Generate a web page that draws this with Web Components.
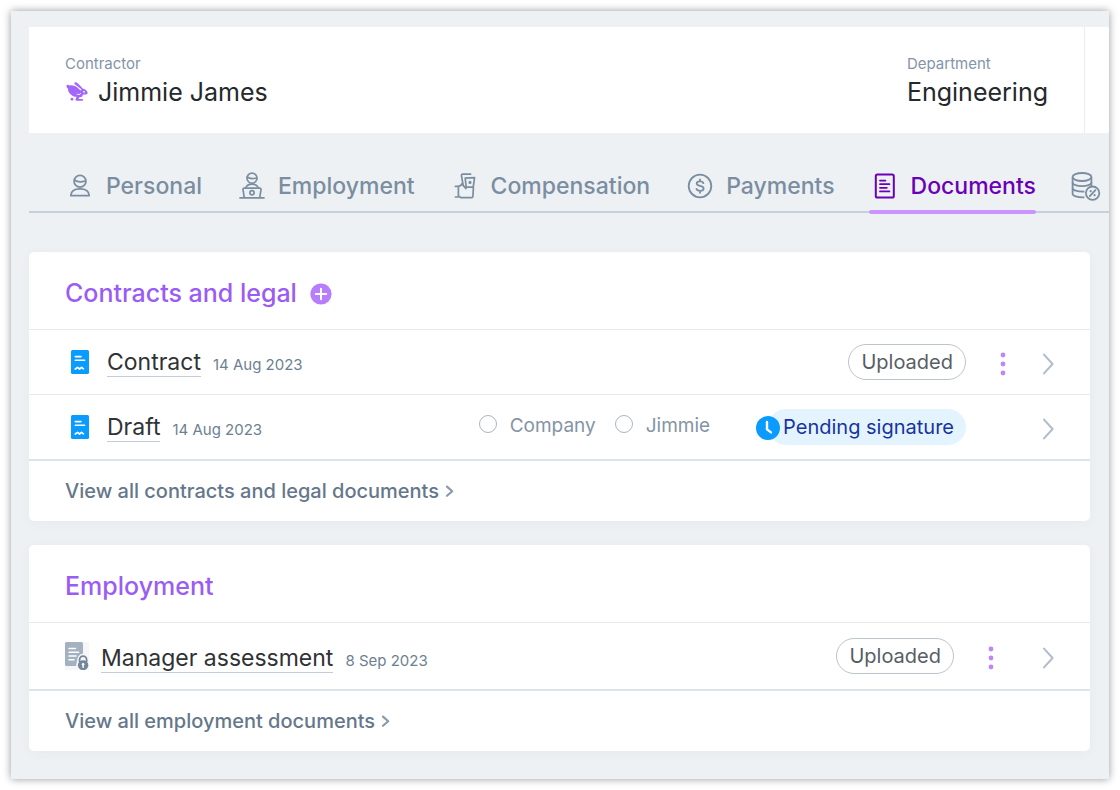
<!DOCTYPE html>
<html lang="en">
<head>
<meta charset="utf-8">
<title>Jimmie James - Documents</title>
<style>
  body {
    margin: 0;
    padding: 11px;
    min-height: 100vh;
    box-sizing: border-box;
    display: flex;
    background: #fff;
    font-family: Inter, "Liberation Sans", sans-serif;
    color: #25282c;
  }
</style>
</head>
<body>
<worker-page>
  <worker-summary slot="header">
    <summary-field label="Contractor" icon="rabbit">Jimmie James</summary-field>
    <summary-field label="Department">Engineering</summary-field>
  </worker-summary>

  <tab-bar slot="tabs">
    <tab-link icon="person">Personal</tab-link>
    <tab-link icon="laptop">Employment</tab-link>
    <tab-link icon="cash">Compensation</tab-link>
    <tab-link icon="dollar">Payments</tab-link>
    <tab-link icon="document" active>Documents</tab-link>
    <tab-link icon="coins" label="Tax"></tab-link>
  </tab-bar>

  <doc-card heading="Contracts and legal" addable more="View all contracts and legal documents">
    <doc-row name="Contract" date="14 Aug 2023" icon="contract" menu>
      <status-pill slot="status">Uploaded</status-pill>
    </doc-row>
    <doc-row name="Draft" date="14 Aug 2023" icon="contract">
      <signer-list slot="signers" names="Company,Jimmie"></signer-list>
      <status-pill slot="status" type="pending">Pending signature</status-pill>
    </doc-row>
  </doc-card>

  <doc-card heading="Employment" more="View all employment documents">
    <doc-row name="Manager assessment" date="8 Sep 2023" icon="locked" menu locked>
      <status-pill slot="status">Uploaded</status-pill>
    </doc-row>
  </doc-card>
</worker-page>

<script>
const ICONS = {
  rabbit: [22, 20, `
    <path fill="currentColor" d="M.6 3.6C1 2.4 2.6 2.4 3.4 3.5C6 2.9 9 3.6 11.4 5.6L14.6 8.4L15.6 7.4L8.8 2.3C7.8 1 8.8-.2 10.2.3C12.6 2 15 4.2 16.6 6.6C19 7 21 8.6 21.6 10.4C21.8 12 20.4 12.6 18.6 12.6L16.6 12.8C17 14 16 15 14.6 15.2L13.4 15.2L12.6 17H16C17.4 17 17.4 18.8 16.2 18.8H11C9.6 18.8 9.2 17.6 9.8 16.6L10.6 14.8C8.4 15 6.4 14 5 12.4C3 11 1.9 9 2 6.6C.8 6 .3 4.8 .6 3.6Z"/>
    <circle cx="6" cy="17.2" r="1.4" fill="currentColor"/>
    <path fill="none" stroke="#fff" stroke-width=".9" stroke-linecap="round" d="M11 12.2C12.2 13 13.6 12.6 14.6 11.6"/>
    <circle cx="18" cy="9.8" r=".9" fill="#fff"/>`],
  person: [24, 24, `
    <g fill="none" stroke="currentColor" stroke-width="1.8" stroke-linejoin="round">
      <circle cx="12" cy="7.3" r="5.9"/>
      <path d="M6.6 6C9.4 8.2 13.6 8.1 17.2 7"/>
      <path d="M2.8 21.6C3 17.4 6.4 14.8 12 14.8S21 17.4 21.2 21.6Z"/>
    </g>`],
  laptop: [28, 28, `
    <g fill="none" stroke="currentColor" stroke-width="1.7" stroke-linejoin="round" stroke-linecap="round">
      <circle cx="14" cy="6.2" r="5"/>
      <path d="M9.2 5C11.8 7 15.4 6.9 18.6 6"/>
      <path d="M8 15.2C9.2 13 11.4 12.2 14 12.2S18.8 13 20 15.2"/>
      <path d="M6.2 25.2L5 17.6Q5 16.2 6.2 16.2H21.8Q23 16.2 23 17.6L21.8 25.2"/>
      <circle cx="14" cy="20.8" r="2.1"/>
      <path d="M2 25.8H26"/>
    </g>`],
  cash: [24, 28, `
    <g fill="none" stroke="currentColor" stroke-width="1.7" stroke-linejoin="round" stroke-linecap="round">
      <path d="M12.2 6.2L21.6 5.6L20.2 15.2H13.2Z"/>
      <path d="M10.2 13.4L8.4 3.4Q8.4 2.2 9.6 2.2H17.6"/>
      <path d="M2.4 14.4H4.8C7 14.4 8.2 13.4 9 11.6M5.4 14.6V24M10.2 13.4L13 16.6"/>
      <path d="M2.4 25H5Q6.6 24 7.6 25.6H18.6Q19.8 25.6 19.9 24.4L20.4 15.4"/>
      <circle cx="17" cy="10.4" r=".7" fill="currentColor"/>
    </g>`],
  dollar: [26, 26, `
    <g fill="none" stroke="currentColor" stroke-width="1.8" stroke-linecap="round">
      <circle cx="13" cy="13" r="11.3"/>
      <path d="M16.4 10.2C16 8.9 14.8 8.3 13 8.3C11 8.3 9.7 9.2 9.7 10.6C9.7 13.8 16.6 12 16.6 15.5C16.6 17 15.1 17.9 13.1 17.9C11.1 17.9 9.8 17.1 9.4 15.8M13 6.4V8.2M13 17.9V19.8"/>
    </g>`],
  document: [24, 28, `
    <g fill="none" stroke="currentColor" stroke-width="2" stroke-linecap="round">
      <rect x="2.8" y="2.6" width="18" height="23" rx="1.6"/>
      <path stroke-width="1.8" d="M7 8.6H12.4M7 12.2H16.4M7 15.8H13.8M7 19.4H16.4"/>
    </g>`],
  coins: [32, 32, `
    <g fill="none" stroke="currentColor" stroke-width="1.8">
      <ellipse cx="12" cy="7" rx="9.4" ry="4"/>
      <path d="M2.6 7V23.4C2.6 25.8 7 27.6 14.4 27.4M21.4 7V16"/>
      <path d="M2.6 12.4C2.6 14.6 7 16.2 12 16.2S21.4 14.6 21.4 12.4M2.6 18C2.6 20.2 7 21.8 14.4 21.6"/>
      <circle cx="22.6" cy="23.2" r="6.7"/>
      <path d="M25.4 20.2L19.8 26.2" stroke-linecap="round"/>
    </g>
    <g fill="currentColor"><circle cx="20.7" cy="21.2" r="1.1"/><circle cx="24.6" cy="25.2" r="1.1"/></g>`],
  contract: [18, 24, `
    <rect width="18" height="24" rx="1.5" fill="#0a9bff"/>
    <path fill="none" stroke="#fff" stroke-width="1.6" stroke-linecap="round" d="M4.3 6.6H10M4.3 10.3H13.6"/>
    <path fill="none" stroke="#fff" stroke-width="1.7" stroke-linecap="round" stroke-linejoin="round" d="M4.3 19L6.6 17.4L8.6 19L10.6 17.4L12.4 18.8"/>`],
  locked: [24, 28, `
    <rect width="24" height="28" fill="#f5f6f8"/>
    <path fill="#a3b1c1" d="M1.5 0H16.5Q18 0 18 1.5V11.4Q13 12.4 12.4 17L11 24H1.5Q0 24 0 22.5V1.5Q0 0 1.5 0Z"/>
    <path fill="none" stroke="#fff" stroke-width="1.5" stroke-linecap="round" d="M4 6.6H10.4M4 10.3H13.6M4 14H11M4 17.8H9"/>
    <path fill="none" stroke="#74869a" stroke-width="1.8" d="M14.6 20V17.6A3.5 3.5 0 0 1 21.6 17.6V20"/>
    <ellipse cx="18.1" cy="23.2" rx="5.2" ry="5" fill="#74869a"/>
    <path stroke="#fff" stroke-width="1.4" stroke-linecap="round" d="M18.1 22.4V25.4"/>
    <circle cx="18.1" cy="22.2" r="1.3" fill="#fff"/>`],
  plus: [22, 22, `
    <circle cx="11" cy="11" r="10.6" fill="#b77dff"/>
    <path stroke="#fff" stroke-width="2" stroke-linecap="round" d="M11 5.8V16.2M5.8 11H16.2"/>`],
  dots: [24, 24, `
    <g fill="#bd86fb"><circle cx="12" cy="3" r="2.4"/><circle cx="12" cy="12" r="2.4"/><circle cx="12" cy="21" r="2.4"/></g>`],
  chevron: [24, 24, `
    <path fill="none" stroke="#b1bdca" stroke-width="2" stroke-linecap="round" stroke-linejoin="round" d="M8 2.6L16.6 12L8 21.4"/>`],
  more: [10, 14, `
    <path fill="none" stroke="#8b9aab" stroke-width="2.2" stroke-linecap="round" stroke-linejoin="round" d="M2 2.6L7.2 7.2L2 11.8"/>`],
  clock: [24, 24, `
    <circle cx="12" cy="12" r="12" fill="#0a9bff"/>
    <path fill="none" stroke="#fff" stroke-width="2.4" stroke-linecap="round" stroke-linejoin="round" d="M11 6V13.4L15 16.4"/>`]
};

class BaseElement extends HTMLElement {
  constructor() {
    super();
    this.attachShadow({ mode: 'open' });
  }

  connectedCallback() {
    this.shadowRoot.innerHTML = this.render();
  }

  attr(name) {
    return this.getAttribute(name) || '';
  }
}

class UiIcon extends BaseElement {
  render() {
    const [w, h, shapes] = ICONS[this.attr('name')];
    return `
      <style>
        :host { display: inline-flex; flex: none; }
        svg { display: block; }
      </style>
      <svg width="${w}" height="${h}" viewBox="0 0 ${w} ${h}" aria-hidden="true">${shapes}</svg>
    `;
  }
}

class WorkerPage extends BaseElement {
  render() {
    return `
      <style>
        :host {
          display: block;
          flex: 1;
          min-width: 0;
          box-sizing: border-box;
          padding: 16px 0 27px 18px;
          background: #edf1f4;
          box-shadow: 0 0 8px rgba(0, 0, 0, .4);
        }
        main {
          display: flex;
          flex-direction: column;
          gap: 24px;
          padding: 39px 19px 0 0;
        }
      </style>
      <slot name="header"></slot>
      <slot name="tabs"></slot>
      <main><slot></slot></main>
    `;
  }
}

class WorkerSummary extends BaseElement {
  render() {
    return `
      <style>
        :host { display: block; background: #fff; padding-right: 24px; }
        header {
          display: flex;
          justify-content: space-between;
          padding: 27px 36px 23px;
          border-right: 1px solid #f3e8ff;
        }
      </style>
      <header><slot></slot></header>
    `;
  }
}

class SummaryField extends BaseElement {
  render() {
    const icon = this.attr('icon');
    return `
      <style>
        :host { display: block; }
        .label { font-size: 15px; line-height: 20px; color: #8494a7; }
        .value {
          display: flex;
          align-items: center;
          gap: 10px;
          font-size: 25px;
          line-height: 36px;
        }
        ui-icon { color: #a366fa; margin-left: 1px; }
      </style>
      <div class="label">${this.attr('label')}</div>
      <div class="value">${icon ? `<ui-icon name="${icon}"></ui-icon>` : ''}<slot></slot></div>
    `;
  }
}

class TabBar extends BaseElement {
  render() {
    return `
      <style>
        :host { display: block; padding-top: 28px; }
        nav {
          display: flex;
          gap: 34px;
          padding-left: 35px;
          border-bottom: 2px solid #c5d0db;
        }
      </style>
      <nav><slot></slot></nav>
    `;
  }
}

class TabLink extends BaseElement {
  render() {
    return `
      <style>
        :host { display: block; flex: none; margin-bottom: -3px; color: #7b8da0; }
        :host([active]) { color: #6a00b8; }
        a {
          display: flex;
          align-items: center;
          gap: 10px;
          height: 49px;
          color: inherit;
          font-size: 23px;
          font-weight: 500;
          text-decoration: none;
        }
        .icon { width: 32px; display: flex; justify-content: center; }
        .line { height: 4px; border-radius: 2px; }
        :host([active]) .line { background: #cb94ff; }
      </style>
      <a href="#" ${this.hasAttribute('active') ? 'aria-current="page"' : ''} ${this.attr('label') ? `aria-label="${this.attr('label')}"` : ''}>
        <span class="icon"><ui-icon name="${this.attr('icon')}"></ui-icon></span>
        <slot></slot>
      </a>
      <div class="line"></div>
    `;
  }
}

class DocCard extends BaseElement {
  render() {
    const add = `<button type="button" aria-label="Add document"><ui-icon name="plus"></ui-icon></button>`;
    return `
      <style>
        :host {
          display: block;
          background: #fff;
          border-radius: 5px;
          box-shadow: 0 2px 12px rgba(60, 80, 100, .04);
        }
        .head { display: flex; align-items: center; gap: 13px; padding: 23px 36px 17px; }
        h2 {
          margin: 0;
          font-size: 25px;
          font-weight: 500;
          line-height: 37px;
          color: #9a5cf5;
        }
        button { display: flex; padding: 0; border: 0; background: none; }
        .foot { border-top: 2px solid #dde3e9; padding: 16px 36px; }
        a {
          display: inline-flex;
          align-items: center;
          gap: 6px;
          font-size: 20px;
          font-weight: 500;
          line-height: 28px;
          color: #65778b;
          text-decoration: none;
        }
      </style>
      <div class="head"><h2>${this.attr('heading')}</h2>${this.hasAttribute('addable') ? add : ''}</div>
      <slot></slot>
      <div class="foot"><a href="#">${this.attr('more')}<ui-icon name="more"></ui-icon></a></div>
    `;
  }
}

class DocRow extends BaseElement {
  render() {
    const menu = `<button class="menu" type="button" aria-label="Document actions"><ui-icon name="dots"></ui-icon></button>`;
    return `
      <style>
        :host {
          display: grid;
          grid-template-columns: 1fr auto auto;
          align-items: center;
          min-height: 65px;
          box-sizing: border-box;
          padding: 0 30px 0 42px;
          border-top: 1px solid #e6ebef;
        }
        :host([locked]) { min-height: 67px; padding-left: 36px; }
        .doc { display: flex; align-items: center; gap: 18px; }
        :host([locked]) .doc { gap: 12px; }
        .title { display: flex; align-items: baseline; gap: 12px; }
        :host([locked]) .title { padding-top: 4px; }
        .name {
          color: #303236;
          font-size: 23px;
          line-height: 28px;
          text-decoration: none;
          border-bottom: 1px solid #c3ccd8;
        }
        .date { font-size: 15px; color: #6d7f92; }
        .actions { display: flex; align-items: center; justify-content: flex-end; margin-left: 46px; }
        .menu { margin-left: 25px; margin-right: 21px; }
        :host([locked]) .menu { margin-right: 33px; }
        :host(:not([menu])) .open { margin-left: 70px; }
        button { display: flex; padding: 0; border: 0; background: none; margin-top: 4px; }
      </style>
      <div class="doc">
        <ui-icon name="${this.attr('icon')}"></ui-icon>
        <div class="title">
          <a class="name" href="#">${this.attr('name')}</a>
          <span class="date">${this.attr('date')}</span>
        </div>
      </div>
      <slot name="signers"></slot>
      <div class="actions">
        <slot name="status"></slot>
        ${this.hasAttribute('menu') ? menu : ''}
        <button class="open" type="button" aria-label="Open ${this.attr('name')}"><ui-icon name="chevron"></ui-icon></button>
      </div>
    `;
  }
}

class SignerList extends BaseElement {
  render() {
    const signers = this.attr('names').split(',').map(name => `
      <label><input type="radio" name="signer">${name}</label>
    `).join('');
    return `
      <style>
        :host { display: flex; gap: 19px; padding-bottom: 3px; }
        label {
          display: flex;
          align-items: center;
          gap: 13px;
          font-size: 19px;
          line-height: 24px;
          color: #8494a5;
        }
        input {
          appearance: none;
          width: 18px;
          height: 18px;
          margin: 0 0 4px;
          box-sizing: border-box;
          border: 1px solid #a9b5c6;
          border-radius: 50%;
          background: #fff;
        }
      </style>
      ${signers}
    `;
  }
}

class StatusPill extends BaseElement {
  render() {
    const pending = this.attr('type') === 'pending';
    return `
      <style>
        :host { display: flex; align-items: center; }
        .pill {
          box-sizing: border-box;
          padding: 0 12px;
          border: 1px solid #bcc4cc;
          border-radius: 18px;
          font-size: 20px;
          line-height: 34px;
          color: #575d65;
          white-space: nowrap;
        }
        :host([type=pending]) .pill {
          border-color: #e4f4ff;
          background: #e4f4ff;
          color: #1733a0;
          padding: 0 11px 0 14px;
        }
        /* the clock overlaps the left end of the pill */
        ui-icon { position: relative; margin: 2px -12px 0 0; }
      </style>
      ${pending ? '<ui-icon name="clock"></ui-icon>' : ''}
      <span class="pill"><slot></slot></span>
    `;
  }
}

customElements.define('ui-icon', UiIcon);
customElements.define('worker-page', WorkerPage);
customElements.define('worker-summary', WorkerSummary);
customElements.define('summary-field', SummaryField);
customElements.define('tab-bar', TabBar);
customElements.define('tab-link', TabLink);
customElements.define('doc-card', DocCard);
customElements.define('doc-row', DocRow);
customElements.define('signer-list', SignerList);
customElements.define('status-pill', StatusPill);
</script>
</body>
</html>
